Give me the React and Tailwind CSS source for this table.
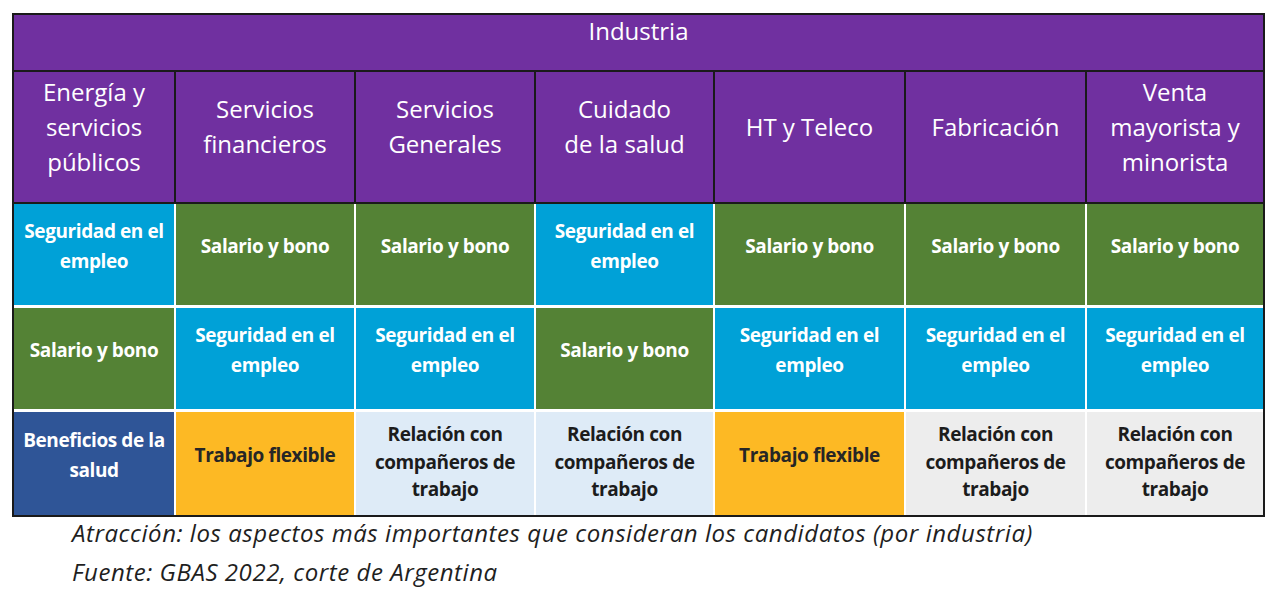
const cols = "grid grid-cols-[160px_178px_178px_177px_189px_179px_176px]";

const headers = [
  ["Energía y", "servicios", "públicos"],
  ["Servicios", "financieros"],
  ["Servicios", "Generales"],
  ["Cuidado", "de la salud"],
  ["HT y Teleco"],
  ["Fabricación"],
  ["Venta", "mayorista y", "minorista"],
];

const SEG = { t: ["Seguridad en el", "empleo"], c: "bg-[#00a1d7] text-white" };
const SAL = { t: ["Salario y bono"], c: "bg-[#548235] text-white" };
const FLEX = { t: ["Trabajo flexible"], c: "bg-[#fdb924] text-[#262626]" };
const REL_B = { t: ["Relación con", "compañeros de", "trabajo"], c: "bg-[#deebf7] text-[#1c1c1c]" };
const REL_G = { t: ["Relación con", "compañeros de", "trabajo"], c: "bg-[#ededed] text-[#1c1c1c]" };
const BEN = { t: ["Beneficios de la", "salud"], c: "bg-[#2f5597] text-white" };

const rows = [
  [SEG, SAL, SAL, SEG, SAL, SAL, SAL],
  [SAL, SEG, SEG, SAL, SEG, SEG, SEG],
  [BEN, FLEX, REL_B, REL_B, FLEX, REL_G, REL_G],
];

function Cell({ cell, h }) {
  const three = cell.t.length === 3;
  return (
    <div className={`flex flex-col items-center justify-center text-center font-bold text-[19px] tracking-[-0.4px] whitespace-nowrap ${h} ${cell.c} ${three ? "leading-[27.5px] pb-[2px]" : "leading-[30px] pb-[18px]"}`}>
      {cell.t.map((line) => (
        <span key={line}>{line}</span>
      ))}
    </div>
  );
}

export default function App() {
  return (
    <div className="w-[1280px] h-[592px] bg-white overflow-hidden font-['Open_Sans','Lato',sans-serif]">
      <div className="ml-[12px] mt-[13px] w-[1253px] border-2 border-[#1a1a1a] bg-[#1a1a1a]">
        {/* Title */}
        <div className="h-[55px] bg-[#7030a0] text-white text-[24px] leading-[32px] text-center">
          Industria
        </div>

        {/* Column headers */}
        <div className={`${cols} gap-x-[2px] mt-[2px]`}>
          {headers.map((h, i) => (
            <div
              key={i}
              className="h-[130px] bg-[#7030a0] text-white text-[24px] leading-[35px] flex flex-col items-center justify-center text-center pb-[22px]"
            >
              {h.map((line) => (
                <span key={line}>{line}</span>
              ))}
            </div>
          ))}
        </div>

        {/* Data */}
        <div className={`${cols} gap-x-[2px] gap-y-[3px] bg-white mt-[2px]`}>
          {rows.map((row, r) =>
            row.map((cell, c) => (
              <Cell key={`${r}-${c}`} cell={cell} h={r === 2 ? "h-[103px]" : "h-[101px]"} />
            ))
          )}
        </div>
      </div>

      {/* Caption */}
      <div className="ml-[72px] -mt-[4px] italic text-[24px] leading-[39px] tracking-[0.55px] text-[#1f1f1f] whitespace-nowrap">
        <p>Atracción: los aspectos más importantes que consideran los candidatos (por industria)</p>
        <p>Fuente: GBAS 2022, corte de Argentina</p>
      </div>
    </div>
  );
}
